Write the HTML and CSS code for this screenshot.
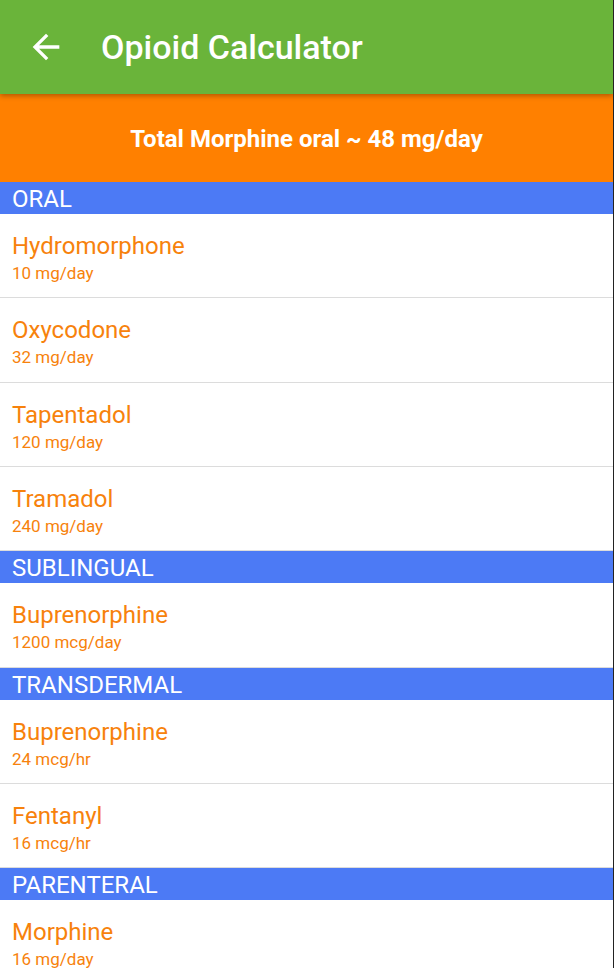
FILE: index.html
```html
<!DOCTYPE html>
<html lang="en">
<head>
    <meta charset="UTF-8">
    <meta name="viewport" content="width=device-width, initial-scale=1.0">
    <title>Opioid Calculator</title>
    <link rel="stylesheet" href="styles.css">
</head>
<body>
    <header class="app-bar">
        <button type="button" class="back-btn" aria-label="Back">
            <svg viewBox="0 0 24 24" width="40" height="40">
                <path d="M20 11H7.83l5.59-5.59L12 4l-8 8 8 8 1.41-1.41L7.83 13H20v-2z" fill="#fff"/>
            </svg>
        </button>
        <h1>Opioid Calculator</h1>
    </header>

    <div class="total">Total Morphine oral ~ 48 mg/day</div>

    <div class="section-title">ORAL</div>
    <div class="drug">
        <div class="drug-name">Hydromorphone</div>
        <div class="drug-dose">10 mg/day</div>
    </div>
    <div class="drug">
        <div class="drug-name">Oxycodone</div>
        <div class="drug-dose">32 mg/day</div>
    </div>
    <div class="drug">
        <div class="drug-name">Tapentadol</div>
        <div class="drug-dose">120 mg/day</div>
    </div>
    <div class="drug">
        <div class="drug-name">Tramadol</div>
        <div class="drug-dose">240 mg/day</div>
    </div>

    <div class="section-title">SUBLINGUAL</div>
    <div class="drug">
        <div class="drug-name">Buprenorphine</div>
        <div class="drug-dose">1200 mcg/day</div>
    </div>

    <div class="section-title">TRANSDERMAL</div>
    <div class="drug">
        <div class="drug-name">Buprenorphine</div>
        <div class="drug-dose">24 mcg/hr</div>
    </div>
    <div class="drug">
        <div class="drug-name">Fentanyl</div>
        <div class="drug-dose">16 mcg/hr</div>
    </div>

    <div class="section-title">PARENTERAL</div>
    <div class="drug">
        <div class="drug-name">Morphine</div>
        <div class="drug-dose">16 mg/day</div>
    </div>
</body>
</html>
```

FILE: styles.css
```css
body {
    font-family: Roboto, 'Noto Sans', sans-serif;
    background-color: #fff;
    margin: 0;
    overflow: hidden;
    border-right: 1px solid #222;
}
.app-bar {
    position: relative;
    z-index: 2;
    height: 94px;
    background-color: #6ab43a;
    display: flex;
    align-items: center;
    box-shadow: 0 2px 5px rgba(0, 0, 0, 0.3);
}
.back-btn {
    background: none;
    border: none;
    padding: 0;
    margin: 0 0 0 26px;
    width: 40px;
    height: 40px;
    cursor: pointer;
}
.back-btn svg {
    display: block;
}
.app-bar h1 {
    margin: 0 0 0 35px;
    color: #fff;
    font-size: 34px;
    font-weight: 500;
}
.total {
    height: 88px;
    background-color: #ff8000;
    color: #fff;
    font-size: 24px;
    font-weight: 700;
    display: flex;
    align-items: center;
    justify-content: center;
    padding-top: 2px;
    box-sizing: border-box;
}
.section-title {
    height: 32px;
    background-color: #4c7af5;
    color: #fff;
    font-size: 24px;
    line-height: 34px;
    padding-left: 12px;
}
.drug {
    height: 83.35px;
    border-bottom: 1px solid #dcdcdc;
    padding-left: 12px;
    color: #f7820c;
}
.drug-name {
    font-size: 24px;
    padding-top: 18px;
    line-height: 28px;
}
.drug-dose {
    font-size: 17px;
    line-height: 22px;
    margin-top: 2px;
}
```
